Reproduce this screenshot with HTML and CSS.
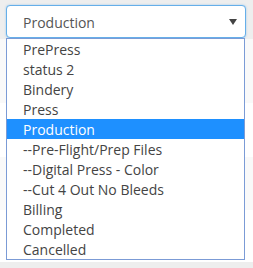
FILE: index.html
```html
<!DOCTYPE html>
<html lang="en">
<head>
    <meta charset="UTF-8">
    <title>Status</title>
    <link rel="stylesheet" href="styles.css">
</head>
<body>
    <div class="stripes">
        <div class="stripe top"></div>
        <div class="stripe odd r1"></div>
        <div class="stripe even r2"></div>
        <div class="stripe odd r3"></div>
        <div class="stripe even r4"></div>
    </div>
    <div class="picker">
        <div class="select-box">
            <span class="value">Production</span>
            <span class="arrow"></span>
        </div>
        <ul class="options">
            <li>PrePress</li>
            <li>status 2</li>
            <li>Bindery</li>
            <li>Press</li>
            <li class="active">Production</li>
            <li>--Pre-Flight/Prep Files</li>
            <li>--Digital Press - Color</li>
            <li>--Cut 4 Out No Bleeds</li>
            <li>Billing</li>
            <li>Completed</li>
            <li>Cancelled</li>
        </ul>
    </div>
</body>
</html>
```

FILE: styles.css
```css
body { margin: 0; background: #eeeeee; font-family: "Open Sans", sans-serif; font-size: 14px; }
.stripes { display: flex; flex-direction: column; }
.stripe.top { height: 39px; }
.stripe.odd { background: #f9f9f9; }
.stripe.even { background: #ffffff; }
.r1 { height: 64px; }
.r2 { height: 54px; }
.r3 { height: 53px; }
.r4 { height: 52px; }
.picker { position: absolute; top: 5px; left: 6px; width: 240px; }
.select-box { height: 31px; border: 1px solid #66afe9; border-radius: 4px; background: #fff; box-shadow: 0 0 2px rgba(102, 175, 233, 0.7); display: flex; align-items: center; justify-content: space-between; padding: 2px 8px 0 16px; box-sizing: content-box; color: #555; }
.select-box { height: 29px; }
.arrow { width: 0; height: 0; margin-top: -2px; border-left: 4px solid transparent; border-right: 4px solid transparent; border-top: 6px solid #444; }
.options { list-style: none; margin: 0; padding: 0; width: 237px; border: 1px solid #7b9bd6; background: #fff; color: #444; }
.options li { height: 19px; padding-top: 1px; line-height: 20px; padding-left: 16px; }
.options li.active { background: #1e90ff; color: #fff; }
```
